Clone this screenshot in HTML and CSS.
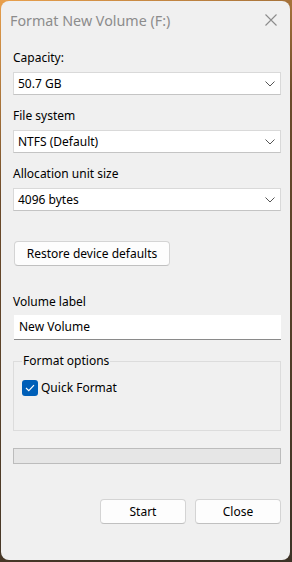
FILE: index.html
```html
<!DOCTYPE html>
<html lang="en">
<head>
    <meta charset="UTF-8">
    <meta name="viewport" content="width=device-width, initial-scale=1.0">
    <title>Format New Volume (F:)</title>
    <link rel="stylesheet" href="styles.css">
</head>
<body>
    <div class="window">
        <div class="titlebar">
            <span class="title">Format New Volume (F:)</span>
            <svg class="close" width="12" height="12" viewBox="0 0 12 12">
                <path d="M0.5 0.5 L11.5 11.5 M11.5 0.5 L0.5 11.5" stroke="#8c8c8c" stroke-width="1.1" fill="none"/>
            </svg>
        </div>

        <div class="content">
            <div class="label first">Capacity:</div>
            <div class="select">
                <span>50.7 GB</span>
                <svg class="chevron" width="10" height="6" viewBox="0 0 10 6"><path d="M0.5 0.5 L5 5 L9.5 0.5" stroke="#555" stroke-width="1" fill="none"/></svg>
            </div>

            <div class="label">File system</div>
            <div class="select">
                <span>NTFS (Default)</span>
                <svg class="chevron" width="10" height="6" viewBox="0 0 10 6"><path d="M0.5 0.5 L5 5 L9.5 0.5" stroke="#555" stroke-width="1" fill="none"/></svg>
            </div>

            <div class="label">Allocation unit size</div>
            <div class="select">
                <span>4096 bytes</span>
                <svg class="chevron" width="10" height="6" viewBox="0 0 10 6"><path d="M0.5 0.5 L5 5 L9.5 0.5" stroke="#555" stroke-width="1" fill="none"/></svg>
            </div>

            <button class="button restore">Restore device defaults</button>

            <div class="label volume">Volume label</div>
            <div class="textbox">New Volume</div>

            <fieldset class="group">
                <legend>Format options</legend>
                <label class="check">
                    <span class="box">
                        <svg width="10" height="8" viewBox="0 0 10 8"><path d="M1 4 L3.8 6.6 L9 1.2" stroke="#fff" stroke-width="1.2" fill="none"/></svg>
                    </span>
                    Quick Format
                </label>
            </fieldset>

            <div class="progress"></div>

            <div class="actions">
                <button class="button action">Start</button>
                <button class="button action">Close</button>
            </div>
        </div>
    </div>
</body>
</html>
```

FILE: styles.css
```css
body {
    margin: 0;
    height: 562px;
    overflow: hidden;
    background: linear-gradient(160deg, #e9a04c 0%, #6b4a2a 30%, #3b3226 100%);
    font-family: "Noto Sans", "Open Sans", sans-serif;
    font-size: 12px;
    color: #000;
}

.window {
    margin: 1px 2px 0 1px;
    height: 559px;
    background: #f0f0f0;
    border-radius: 8px;
    overflow: hidden;
}

.titlebar {
    height: 38px;
    display: flex;
    align-items: center;
    justify-content: space-between;
    padding: 0 13px 0 9px;
}

.title {
    font-size: 14.3px;
    color: #8c8c8c;
}

.content {
    padding: 0 9px 0 12px;
    display: flex;
    flex-direction: column;
}

.label {
    line-height: 16px;
    margin: 13px 0 6px 0;
}

.label.first {
    margin-top: 11px;
}

.select {
    height: 23px;
    box-sizing: border-box;
    background: #fff;
    border: 1px solid #d9d9d9;
    border-bottom-color: #c4c4c4;
    display: flex;
    align-items: center;
    justify-content: space-between;
    padding: 0 5px 0 4px;
    line-height: 16px;
}

.button {
    font-family: inherit;
    font-size: 12px;
    color: #000;
    background: #fdfdfd;
    border: 1px solid #d4d4d4;
    border-bottom-color: #c0c0c0;
    border-radius: 4px;
    height: 25px;
    padding: 0;
}

.restore {
    align-self: flex-start;
    margin: 30px 0 0 1px;
    width: 156px;
}

.volume {
    margin-top: 28px;
    margin-bottom: 5px;
}

.textbox {
    height: 25px;
    box-sizing: border-box;
    margin-left: 1px;
    background: #fff;
    border-bottom: 1px solid #8a8a8a;
    padding-left: 5px;
    line-height: 24px;
}

.group {
    margin: 13px 0 0 0;
    padding: 0 8px;
    height: 78px;
    box-sizing: border-box;
    border: 1px solid #dcdcdc;
    min-width: 0;
}

.group legend {
    padding: 0 1px;
    line-height: 16px;
}

.check {
    display: flex;
    align-items: center;
    gap: 3px;
    margin-top: 11px;
    line-height: 16px;
}

.box {
    width: 16px;
    height: 16px;
    background: #005fb8;
    border-radius: 3px;
    display: flex;
    align-items: center;
    justify-content: center;
}

.progress {
    margin-top: 17px;
    height: 16px;
    box-sizing: border-box;
    background: #e6e6e6;
    border: 1px solid #bcbcbc;
}

.actions {
    display: flex;
    justify-content: flex-end;
    gap: 9px;
    margin-top: 35px;
}

.action {
    width: 86px;
}
```
